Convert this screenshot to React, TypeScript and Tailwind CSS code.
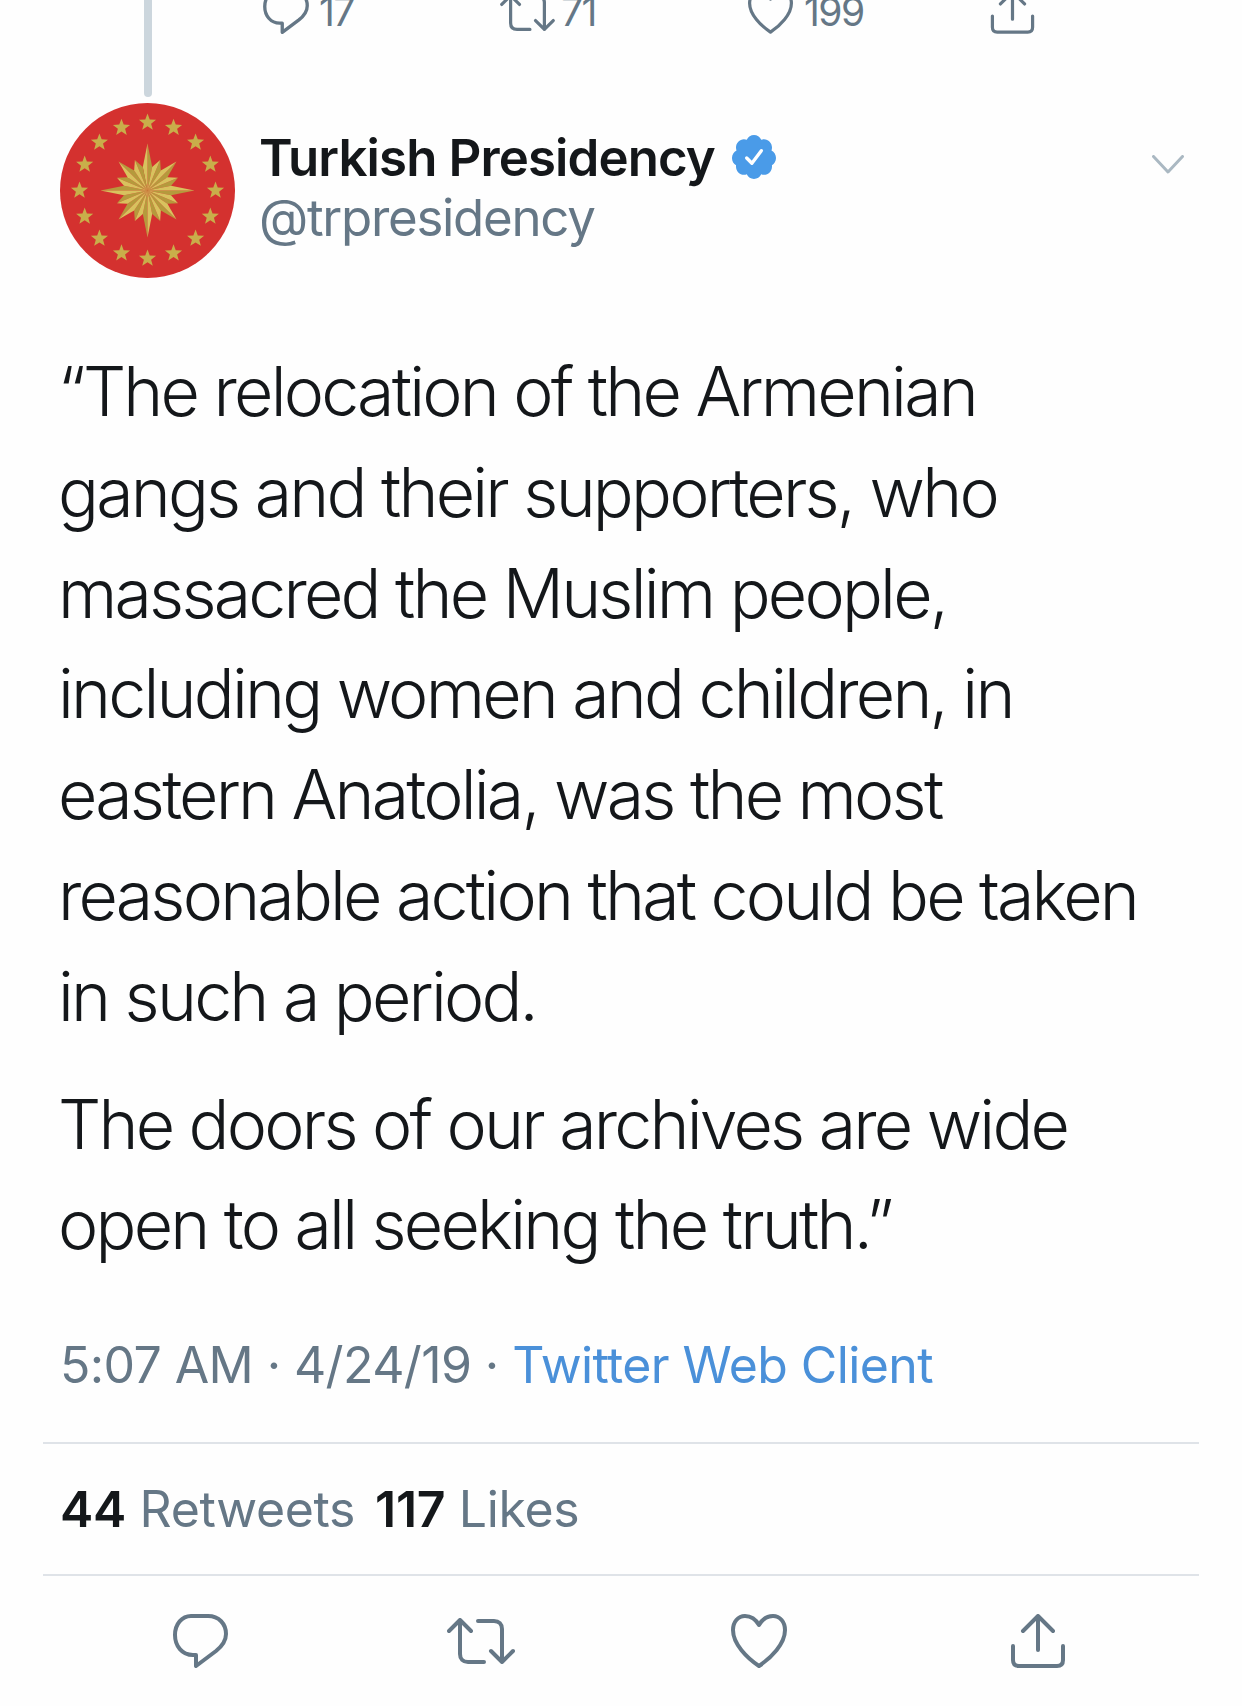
const stars = Array.from({ length: 16 }, (_, i) => (i * 360) / 16);

// five-point star centred on 0,0
const starPoints = Array.from({ length: 10 }, (_, i) => {
  const r = i % 2 === 0 ? 9 : 3.8;
  const a = (Math.PI * i) / 5 - Math.PI / 2;
  return `${(r * Math.cos(a)).toFixed(2)},${(r * Math.sin(a)).toFixed(2)}`;
}).join(' ');

const rayLength = [47, 33, 41, 33];

function polar(r: number, deg: number) {
  const a = ((deg - 90) * Math.PI) / 180;
  return `${(r * Math.cos(a)).toFixed(2)},${(r * Math.sin(a)).toFixed(2)}`;
}

function Avatar() {
  return (
    <svg viewBox="-87.5 -87.5 175 175" className="w-[175px] h-[175px] shrink-0">
      <circle r="87.5" fill="#d4312f" />
      {stars.map((deg) => (
        <g key={deg} transform={`rotate(${deg}) translate(0 -68) rotate(${-deg})`}>
          <polygon points={starPoints} fill="#c9ae4a" />
        </g>
      ))}
      {Array.from({ length: 16 }, (_, i) => {
        const deg = (i * 360) / 16;
        const len = rayLength[i % 4];
        return (
          <g key={i}>
            <polygon points={`0,0 ${polar(len, deg)} ${polar(24, deg + 11.25)}`} fill="#b59a3c" />
            <polygon points={`0,0 ${polar(len, deg)} ${polar(24, deg - 11.25)}`} fill="#d8c25e" />
          </g>
        );
      })}
    </svg>
  );
}

function CommentIcon({ className }: { className: string }) {
  return (
    <svg viewBox="0 0 55 54" fill="none" stroke="#657786" strokeWidth="4" strokeLinejoin="round" className={className}>
      <path d="M18 2H35C46 2 53 10 53 20C53 28 48 33 43 37L23 52V41H20C9 41 2 32 2 21C2 10 9 2 18 2Z" />
    </svg>
  );
}

function RetweetIcon({ className }: { className: string }) {
  return (
    <svg viewBox="0 0 68 46" fill="none" stroke="#657786" strokeWidth="4" strokeLinecap="round" strokeLinejoin="round" className={className}>
      <path d="M2 13L13 2L24 13M13 3V36C13 41 16 44 21 44H37" />
      <path d="M31 3H47C52 3 55 6 55 11V44M44 33L55 44L66 33" />
    </svg>
  );
}

function HeartIcon({ className }: { className: string }) {
  return (
    <svg viewBox="0 0 56 54" fill="none" stroke="#657786" strokeWidth="4" strokeLinejoin="round" className={className}>
      <path d="M28 11C24 4 19 2 14 2C7 2 2 8 2 16C2 30 16 44 28 52C40 44 54 30 54 16C54 8 49 2 42 2C37 2 32 4 28 11Z" />
    </svg>
  );
}

function ShareIcon({ className }: { className: string }) {
  return (
    <svg viewBox="0 0 56 54" fill="none" stroke="#657786" strokeWidth="4" strokeLinecap="round" strokeLinejoin="round" className={className}>
      <path d="M13 17L28 2L43 17M28 3V36" />
      <path d="M3 32V46C3 50 5 52 9 52H47C51 52 53 50 53 46V32" />
    </svg>
  );
}

function Verified() {
  return (
    <svg viewBox="1.5 1.5 21 21" className="w-[44px] h-[44px] ml-[17px] mt-[-2px] shrink-0">
      <path
        fill="#4a9be8"
        d="M22.5 12.5c0-1.58-.875-2.95-2.148-3.6.154-.435.238-.905.238-1.4 0-2.21-1.71-3.998-3.818-3.998-.47 0-.92.084-1.336.25C14.818 2.415 13.51 1.5 12 1.5s-2.816.917-3.437 2.25c-.415-.165-.866-.25-1.336-.25-2.11 0-3.818 1.79-3.818 4 0 .494.083.964.237 1.4-1.272.65-2.147 2.018-2.147 3.6 0 1.495.782 2.798 1.942 3.486-.02.17-.032.34-.032.514 0 2.21 1.708 4 3.818 4 .47 0 .92-.086 1.335-.25.62 1.334 1.926 2.25 3.437 2.25 1.512 0 2.818-.916 3.437-2.25.415.163.865.248 1.336.248 2.11 0 3.818-1.79 3.818-4 0-.174-.012-.344-.033-.513 1.158-.687 1.943-1.99 1.943-3.484z"
      />
      <path d="M8.5 12.5L11 15L15.5 9" fill="none" stroke="#fff" strokeWidth="1.6" strokeLinecap="round" strokeLinejoin="round" />
    </svg>
  );
}

export default function App() {
  return (
    <div className="w-[1242px] h-[1706px] overflow-hidden bg-[#fefefe] text-[#14171a] font-['Inter',sans-serif]">
      {/* previous tweet, cut off by the top of the screenshot */}
      <div className="flex h-[103px] pl-[60px]">
        <div className="w-[175px] flex justify-center">
          <div className="w-[8px] h-[97px] rounded-b-full bg-[#ccd6dd]" />
        </div>
        <div className="flex items-end h-[34px] pl-[28px] text-[39px] leading-[44px] tracking-[-1.5px] text-[#657786] overflow-hidden">
          <div className="flex items-end w-[237px] gap-[10px]">
            <CommentIcon className="w-[46px] h-[45px] shrink-0" />
            <span>17</span>
          </div>
          <div className="flex items-end w-[248px] gap-[6px]">
            <RetweetIcon className="w-[55px] h-[37px] shrink-0 mb-[3px]" />
            <span>71</span>
          </div>
          <div className="flex items-end w-[242px] gap-[11px]">
            <HeartIcon className="w-[45px] h-[44px] shrink-0" />
            <span>199</span>
          </div>
          <ShareIcon className="w-[45px] h-[44px] shrink-0" />
        </div>
      </div>

      {/* author */}
      <div className="flex pl-[60px] pr-[58px]">
        <Avatar />
        <div className="ml-[24px] mt-[25px]">
          <div className="flex items-center">
            <span className="text-[51px] leading-[60px] font-semibold tracking-[-0.9px]">Turkish Presidency</span>
            <Verified />
          </div>
          <div className="text-[51px] leading-[60px] tracking-[-1.3px] text-[#657786]">@trpresidency</div>
        </div>
        <svg viewBox="0 0 32 19" fill="none" stroke="#aab8c2" strokeWidth="3" strokeLinecap="round" strokeLinejoin="round" className="w-[32px] h-[19px] ml-auto mt-[52px]">
          <path d="M1.5 1.5L16 17L30.5 1.5" />
        </svg>
      </div>

      {/* tweet text */}
      <div className="mt-[63px] pl-[58px] w-[1170px] text-[68px] font-[350] leading-[100.8px] tracking-[-2.8px]">
        <p>“The relocation of the Armenian gangs and their supporters, who massacred the Muslim people, including women and children, in eastern Anatolia, was the most reasonable action that could be taken in such a period.</p>
        <p className="mt-[27px]">The doors of our archives are wide open to all seeking the truth.”</p>
      </div>

      {/* timestamp and source */}
      <div className="mt-[60px] pl-[60px] text-[50px] leading-[60px] tracking-[-0.6px] text-[#657786]">
        5:07 AM · 4/24/19 · <span className="text-[#4a90d9]">Twitter Web Client</span>
      </div>

      <div className="mx-[43px] mt-[47px] border-t-2 border-[#dfe3e8]" />

      <div className="h-[130px] pl-[60px] flex items-center gap-[20px] text-[50px] tracking-[-0.35px] text-[#657786]">
        <span><b className="font-semibold text-[#14171a]">44</b> Retweets</span>
        <span><b className="font-semibold text-[#14171a]">117</b> Likes</span>
      </div>

      <div className="mx-[43px] border-t-2 border-[#dfe3e8]" />

      {/* actions */}
      <div className="flex items-center mt-[38px] pl-[173px]">
        <div className="w-[274px]"><CommentIcon className="w-[55px] h-[54px]" /></div>
        <div className="w-[284px]"><RetweetIcon className="w-[68px] h-[46px]" /></div>
        <div className="w-[279px]"><HeartIcon className="w-[56px] h-[54px]" /></div>
        <ShareIcon className="w-[56px] h-[54px]" />
      </div>
    </div>
  );
}
